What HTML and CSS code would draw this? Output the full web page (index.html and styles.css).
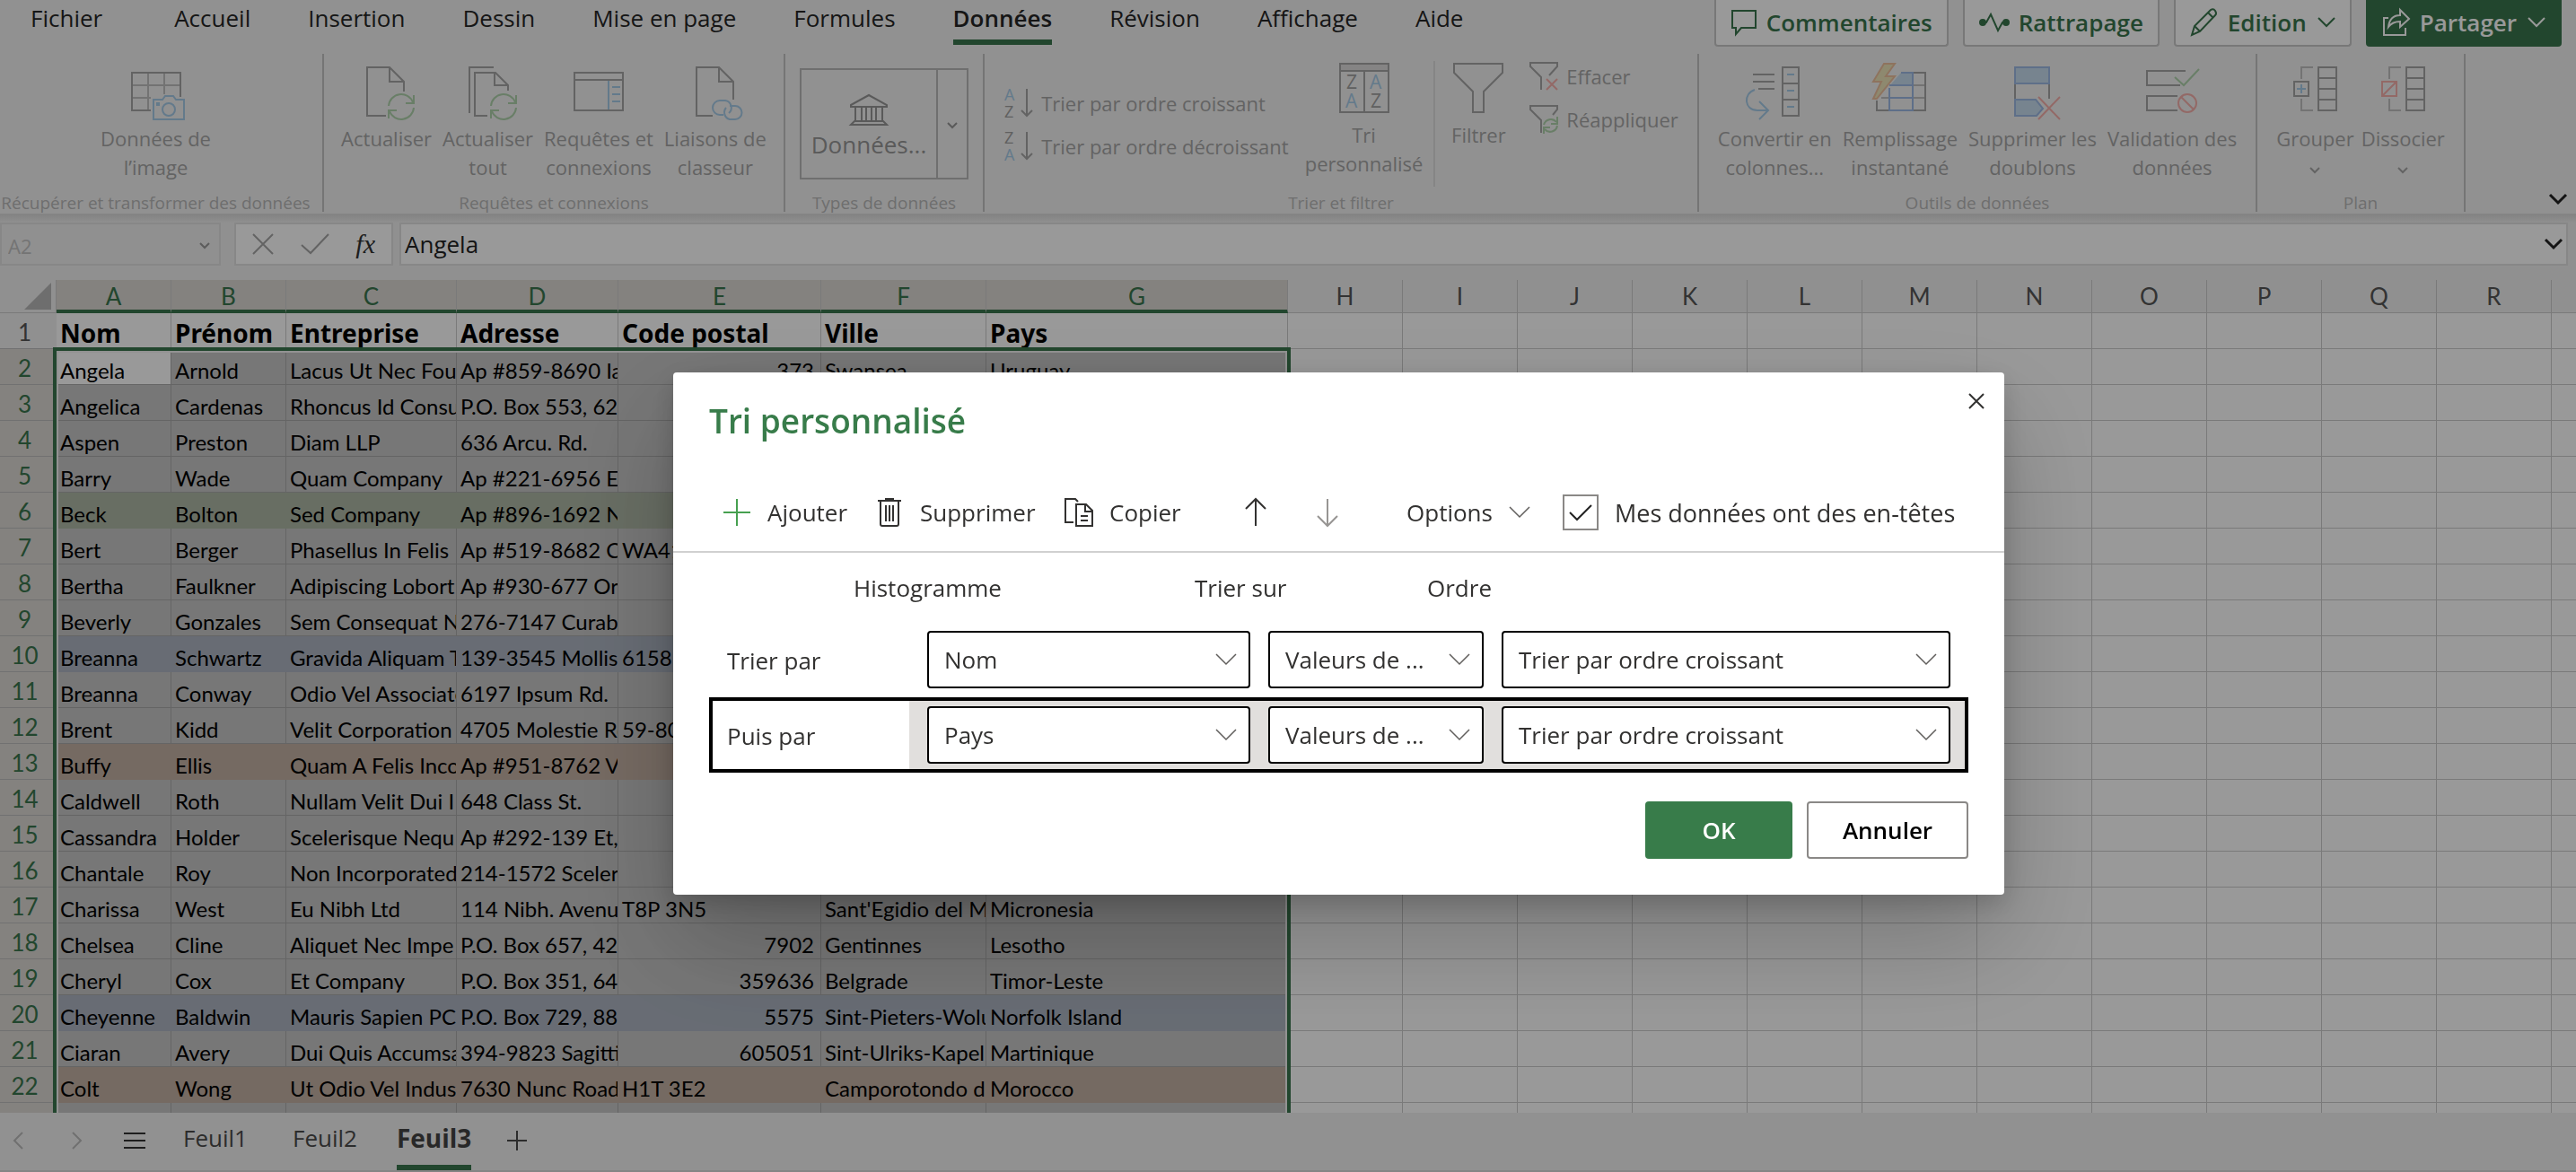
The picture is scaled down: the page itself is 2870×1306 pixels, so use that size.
FILE: index.html
```html
<!DOCTYPE html>
<html lang="fr">
<head>
<meta charset="utf-8">
<title>Classeur</title>
<link rel="stylesheet" href="styles.css">
</head>
<body>
<div class="app">
  <header class="topbar">
    <nav class="tabs">
      <a href="#fichier">Fichier</a>
      <a href="#accueil">Accueil</a>
      <a href="#insertion">Insertion</a>
      <a href="#dessin">Dessin</a>
      <a href="#mise-en-page">Mise en page</a>
      <a href="#formules">Formules</a>
      <a href="#donnees" class="active">Données</a>
      <a href="#revision">Révision</a>
      <a href="#affichage">Affichage</a>
      <a href="#aide">Aide</a>
    </nav>
    <div class="actions">
      <button class="act"><svg width="30" height="32" viewBox="0 0 30 32"><path d="M2 3h26v19H12l-6 7v-7H2z"/></svg>Commentaires</button>
      <button class="act"><svg width="34" height="32" viewBox="0 0 34 32"><path d="M4 16h4l5-9 8 18 5-9h4"/><circle class="dot" cx="4" cy="16" r="3"/><circle class="dot" cx="30" cy="16" r="3"/></svg>Rattrapage</button>
      <button class="act"><svg width="32" height="32" viewBox="0 0 32 32"><path d="M2 30l3-10L23 2q3-2 5 1t0 5L11 26zM5 20l6 6M20 5l6 6"/></svg>Edition<svg class="chev" width="20" height="12" viewBox="0 0 20 12"><path d="M1 1l9 9 9-9"/></svg></button>
      <button class="act primary"><svg width="32" height="32" viewBox="0 0 32 32"><path d="M7 11H2v19h24v-8M20 2l10 10-10 9v-6c-7 0-10 2-13 6 1-8 5-13 13-13z"/></svg>Partager<svg class="chev" width="20" height="12" viewBox="0 0 20 12"><path d="M1 1l9 9 9-9"/></svg></button>
    </div>
  </header>

  <section class="ribbon">
    <div class="group g-import">
      <div class="tools">
        <button class="tool"><svg width="64" height="66" viewBox="0 0 64 66"><path class="lt" d="M23 9v42M41 9v24M5 23h54M5 37h21"/><path d="M26 51H5V9h54v27"/><path class="bl" d="M29 39h10l3-4h9l3 4h9v22H29z"/><circle class="bl" cx="46" cy="50" r="7"/><path class="blf" d="M32 42h4v4h-4z"/></svg>Données de<br>l’image</button>
      </div>
      <h2>Récupérer et transformer des données</h2>
    </div>
    <div class="group g-query">
      <div class="tools">
        <button class="tool"><svg width="64" height="66" viewBox="0 0 64 66"><path d="M31 57H10V3h25l16 16v11M35 3v16h16"/><path class="gr" d="M34 46a14 14 0 0 1 27-4M62 34v9h-9M62 48a14 14 0 0 1-27 4M34 60v-9h9"/></svg>Actualiser</button>
        <button class="tool"><svg width="64" height="66" viewBox="0 0 64 66"><path d="M38 3H11v51M31 57H17V9h23l14 14v6M39 9v14h15"/><path class="gr" d="M35 46a14 14 0 0 1 27-4M63 34v9h-9M63 48a14 14 0 0 1-27 4M35 60v-9h9"/></svg>Actualiser<br>tout</button>
        <button class="tool"><svg width="64" height="66" viewBox="0 0 64 66"><path d="M5 9h54v42H5zM5 17h54"/><path class="bl" d="M43 18v32M47 25h9M47 33h9M47 41h9"/></svg>Requêtes et<br>connexions</button>
        <button class="tool"><svg width="64" height="66" viewBox="0 0 64 66"><path d="M29 57H11V3h25l16 16v20M36 3v16h16"/><path class="bl" d="M41 56h-4a8 8 0 0 1 0-16h6a8 8 0 0 1 4 14M48 46h6a7 7 0 0 1 0 15h-6a8 8 0 0 1-4-13"/></svg>Liaisons de<br>classeur</button>
      </div>
      <h2>Requêtes et connexions</h2>
    </div>
    <div class="group g-types">
      <div class="tools">
        <div class="gallery">
          <button class="pick"><svg width="42" height="36" viewBox="0 0 42 36"><path d="M1 12L21 1l20 11v2H1zM6 14v16M13 14v16M18 14v16M24 14v16M29 14v16M36 14v16M5 30h32l4 4H1z"/></svg>Données...</button>
          <button class="more" aria-label="Autres types"><svg width="12" height="8" viewBox="0 0 12 8"><path d="M1 1l5 5 5-5"/></svg></button>
        </div>
      </div>
      <h2>Types de données</h2>
    </div>
    <div class="group g-sort">
      <div class="tools">
        <div class="stack sort">
          <button class="line"><svg width="34" height="36" viewBox="0 0 34 36"><text class="tb" x="1" y="15">A</text><text x="1" y="34">Z</text><path d="M26 2v30M20 26l6 6 6-6"/></svg>Trier par ordre croissant</button>
          <button class="line"><svg width="34" height="36" viewBox="0 0 34 36"><text x="1" y="15">Z</text><text class="tb" x="1" y="34">A</text><path d="M26 2v30M20 26l6 6 6-6"/></svg>Trier par ordre décroissant</button>
        </div>
        <button class="tool up"><svg width="64" height="66" viewBox="0 0 64 66"><path class="fillg" d="M5 3h54v8H5z"/><path d="M5 3h54v54H5zM5 11h54M32 11v46"/><text class="lg" x="12" y="31">Z</text><text class="lg tb" x="11" y="52">A</text><text class="lg tb" x="38" y="31">A</text><text class="lg" x="39" y="52">Z</text></svg>Tri<br>personnalisé</button>
        <span class="rule"></span>
        <button class="tool up"><svg width="64" height="66" viewBox="0 0 64 66"><path d="M5 3h54v10L38 34v23H26V34L5 13z"/></svg>Filtrer</button>
        <div class="stack filter">
          <button class="line"><svg width="34" height="34" viewBox="0 0 34 34"><path d="M14 32V18L2 6V2h30v4l-9 10"/><path class="rd" d="M20 20l12 12M32 20L20 32"/></svg>Effacer</button>
          <button class="line"><svg width="34" height="34" viewBox="0 0 34 34"><path d="M14 32V18L2 6V2h30v4l-5 6"/><path class="gr" d="M17 23a8 8 0 0 1 14-3M32 14v8h-7M32 24a8 8 0 0 1-14 4M17 33v-7h7"/></svg>Réappliquer</button>
        </div>
      </div>
      <h2>Trier et filtrer</h2>
    </div>
    <div class="group g-tools">
      <div class="tools">
        <button class="tool"><svg width="64" height="66" viewBox="0 0 64 66"><path d="M8 11h24M8 19h24M14 27h18M41 3h18v54H41zM41 21h18M41 39h18"/><path class="bl" d="M46 11h8M46 29h8M46 47h8M10 28C-3 32-2 51 13 51h12M15 41l10 10-10 10"/></svg>Convertir en<br>colonnes...</button>
        <button class="tool"><svg width="64" height="66" viewBox="0 0 64 66"><path class="lt" d="M47 23h13M47 37h13M11 37h9"/><path d="M47 9h13v42H6V40"/><path class="fillb" d="M33 9h13v14H21z"/><path class="b2" d="M33 9h13v42H20V26M20 23h26M20 37h26"/><path class="or" d="M14-1h12L16 13h10L6 38H2l9-19H2z"/></svg>Remplissage<br>instantané</button>
        <button class="tool"><svg width="64" height="66" viewBox="0 0 64 66"><path d="M13 21v18M51 21v17"/><path class="b2 fillb" d="M13 3h38v18H13zM37 57H13V39h23l8 10z"/><path class="rd" d="M39 36l24 25M63 36L39 61"/></svg>Supprimer les<br>doublons</button>
        <button class="tool"><svg width="64" height="66" viewBox="0 0 64 66"><path d="M47 7H4v16h37M38 35H4v16h34"/><path class="gr" d="M35 14l10 9L62 5"/><circle class="rd" cx="49" cy="43" r="10"/><path class="rd" d="M42 36l14 14"/></svg>Validation des<br>données</button>
      </div>
      <h2>Outils de données</h2>
    </div>
    <div class="group g-plan">
      <div class="tools">
        <button class="tool"><svg width="64" height="66" viewBox="0 0 64 66"><path class="lt" d="M30 3H17v13M17 38v13h13"/><path d="M9 19h16v16H9zM36 3h20v48H36zM36 15h20M36 27h20M36 39h20"/><path class="bl" d="M17 22v10M12 27h10"/></svg>Grouper<svg class="drop" width="12" height="8" viewBox="0 0 12 8"><path d="M1 1l5 5 5-5"/></svg></button>
        <button class="tool"><svg width="64" height="66" viewBox="0 0 64 66"><path class="lt" d="M30 3H17v13M17 38v13h13"/><path d="M36 3h20v48H36zM36 15h20M36 27h20M36 39h20"/><path class="rd" d="M9 19h16v16H9zM9 35l16-16"/></svg>Dissocier<svg class="drop" width="12" height="8" viewBox="0 0 12 8"><path d="M1 1l5 5 5-5"/></svg></button>
      </div>
      <h2>Plan</h2>
    </div>
    <button class="collapse" aria-label="Réduire le ruban"><svg width="20" height="12" viewBox="0 0 20 12"><path d="M1 1l9 9 9-9"/></svg></button>
  </section>

  <section class="formula">
    <div class="namebox"><input value="A2" aria-label="Zone Nom"><svg width="12" height="8" viewBox="0 0 12 8"><path d="M1 1l5 5 5-5"/></svg></div>
    <div class="fx">
      <svg width="24" height="24" viewBox="0 0 24 24"><path d="M1 1l22 22M23 1L1 23"/></svg>
      <svg width="32" height="24" viewBox="0 0 32 24"><path d="M1 13l10 9L31 1"/></svg>
      <i>fx</i>
    </div>
    <div class="entry"><input value="Angela" aria-label="Barre de formule"><svg width="20" height="12" viewBox="0 0 20 12"><path d="M1 1l9 9 9-9"/></svg></div>
  </section>

  <main class="sheet">
    <table>
      <colgroup><col class="c-n"><col class="c-a"><col class="c-a"><col class="c-c"><col class="c-d"><col class="c-e"><col class="c-f"><col class="c-g"><col class="c-a" span="12"></colgroup>
      <thead>
        <tr><td class="corner"><svg width="30" height="30" viewBox="0 0 30 30"><path d="M30 0v30H0z"/></svg></td><th class="on">A</th><th class="on">B</th><th class="on">C</th><th class="on">D</th><th class="on">E</th><th class="on">F</th><th class="on">G</th><th>H</th><th>I</th><th>J</th><th>K</th><th>L</th><th>M</th><th>N</th><th>O</th><th>P</th><th>Q</th><th>R</th><th></th></tr>
      </thead>
      <tbody>
        <tr class="titles"><th>1</th><td>Nom</td><td>Prénom</td><td>Entreprise</td><td>Adresse</td><td>Code postal</td><td>Ville</td><td>Pays</td><td class="rest" colspan="12"></td></tr>
        <tr><th>2</th><td class="current">Angela</td><td>Arnold</td><td>Lacus Ut Nec Foun</td><td>Ap #859-8690 Iac</td><td class="num">373</td><td>Swansea</td><td>Uruguay</td><td class="rest" colspan="12"></td></tr>
        <tr><th>3</th><td>Angelica</td><td>Cardenas</td><td>Rhoncus Id Consu</td><td>P.O. Box 553, 626</td><td></td><td></td><td></td><td class="rest" colspan="12"></td></tr>
        <tr><th>4</th><td>Aspen</td><td>Preston</td><td>Diam LLP</td><td>636 Arcu. Rd.</td><td></td><td></td><td></td><td class="rest" colspan="12"></td></tr>
        <tr><th>5</th><td>Barry</td><td>Wade</td><td>Quam Company</td><td>Ap #221-6956 Eu</td><td></td><td></td><td></td><td class="rest" colspan="12"></td></tr>
        <tr class="green"><th>6</th><td>Beck</td><td>Bolton</td><td>Sed Company</td><td>Ap #896-1692 Nu</td><td></td><td></td><td></td><td class="rest" colspan="12"></td></tr>
        <tr><th>7</th><td>Bert</td><td>Berger</td><td>Phasellus In Felis</td><td>Ap #519-8682 Cu</td><td>WA41</td><td></td><td></td><td class="rest" colspan="12"></td></tr>
        <tr><th>8</th><td>Bertha</td><td>Faulkner</td><td>Adipiscing Lobort</td><td>Ap #930-677 Orc</td><td></td><td></td><td></td><td class="rest" colspan="12"></td></tr>
        <tr><th>9</th><td>Beverly</td><td>Gonzales</td><td>Sem Consequat N</td><td>276-7147 Curabi</td><td></td><td></td><td></td><td class="rest" colspan="12"></td></tr>
        <tr class="blue"><th>10</th><td>Breanna</td><td>Schwartz</td><td>Gravida Aliquam T</td><td>139-3545 Mollis</td><td>6158</td><td></td><td></td><td class="rest" colspan="12"></td></tr>
        <tr><th>11</th><td>Breanna</td><td>Conway</td><td>Odio Vel Associate</td><td>6197 Ipsum Rd.</td><td></td><td></td><td></td><td class="rest" colspan="12"></td></tr>
        <tr><th>12</th><td>Brent</td><td>Kidd</td><td>Velit Corporation</td><td>4705 Molestie Ro</td><td>59-80</td><td></td><td></td><td class="rest" colspan="12"></td></tr>
        <tr class="orange"><th>13</th><td>Buffy</td><td>Ellis</td><td>Quam A Felis Inco</td><td>Ap #951-8762 Vi</td><td></td><td></td><td></td><td class="rest" colspan="12"></td></tr>
        <tr><th>14</th><td>Caldwell</td><td>Roth</td><td>Nullam Velit Dui I</td><td>648 Class St.</td><td></td><td></td><td></td><td class="rest" colspan="12"></td></tr>
        <tr><th>15</th><td>Cassandra</td><td>Holder</td><td>Scelerisque Nequ</td><td>Ap #292-139 Et,</td><td></td><td></td><td></td><td class="rest" colspan="12"></td></tr>
        <tr><th>16</th><td>Chantale</td><td>Roy</td><td>Non Incorporated</td><td>214-1572 Sceleri</td><td></td><td></td><td></td><td class="rest" colspan="12"></td></tr>
        <tr><th>17</th><td>Charissa</td><td>West</td><td>Eu Nibh Ltd</td><td>114 Nibh. Avenu</td><td>T8P 3N5</td><td>Sant'Egidio del M</td><td>Micronesia</td><td class="rest" colspan="12"></td></tr>
        <tr><th>18</th><td>Chelsea</td><td>Cline</td><td>Aliquet Nec Impe</td><td>P.O. Box 657, 426</td><td class="num">7902</td><td>Gentinnes</td><td>Lesotho</td><td class="rest" colspan="12"></td></tr>
        <tr><th>19</th><td>Cheryl</td><td>Cox</td><td>Et Company</td><td>P.O. Box 351, 648</td><td class="num">359636</td><td>Belgrade</td><td>Timor-Leste</td><td class="rest" colspan="12"></td></tr>
        <tr class="blue"><th>20</th><td>Cheyenne</td><td>Baldwin</td><td>Mauris Sapien PC</td><td>P.O. Box 729, 884</td><td class="num">5575</td><td>Sint-Pieters-Wolu</td><td>Norfolk Island</td><td class="rest" colspan="12"></td></tr>
        <tr><th>21</th><td>Ciaran</td><td>Avery</td><td>Dui Quis Accumsa</td><td>394-9823 Sagittis</td><td class="num">605051</td><td>Sint-Ulriks-Kapell</td><td>Martinique</td><td class="rest" colspan="12"></td></tr>
        <tr class="orange"><th>22</th><td>Colt</td><td>Wong</td><td>Ut Odio Vel Indust</td><td>7630 Nunc Road</td><td>H1T 3E2</td><td>Camporotondo d</td><td>Morocco</td><td class="rest" colspan="12"></td></tr>
        <tr><th></th><td></td><td></td><td></td><td></td><td></td><td></td><td></td><td class="rest" colspan="12"></td></tr>
      </tbody>
    </table>
    <div class="selection"></div>
  </main>

  <footer class="sheets">
    <button class="nav faint" aria-label="Précédent"><svg width="12" height="20" viewBox="0 0 12 20"><path d="M11 1l-9 9 9 9"/></svg></button>
    <button class="nav faint" aria-label="Suivant"><svg width="12" height="20" viewBox="0 0 12 20"><path d="M1 1l9 9-9 9"/></svg></button>
    <button class="nav wide" aria-label="Toutes les feuilles"><svg width="24" height="20" viewBox="0 0 24 20"><path d="M0 2h24M0 10h24M0 18h24"/></svg></button>
    <a href="#feuil1">Feuil1</a>
    <a href="#feuil2">Feuil2</a>
    <a href="#feuil3" class="active">Feuil3</a>
    <button class="nav" aria-label="Nouvelle feuille"><svg width="22" height="22" viewBox="0 0 22 22"><path d="M11 0v22M0 11h22"/></svg></button>
  </footer>
</div>

<div class="scrim"></div>

<section class="dialog" role="dialog" aria-labelledby="dlg-title">
  <button class="close" aria-label="Fermer"><svg width="18" height="18" viewBox="0 0 18 18"><path d="M1 1l16 16M17 1L1 17"/></svg></button>
  <h1 id="dlg-title">Tri personnalisé</h1>
  <div class="commands">
    <button class="cmd w-add"><svg class="plus" width="32" height="32" viewBox="0 0 32 32"><path d="M16 1v30M1 16h30"/></svg>Ajouter</button>
    <button class="cmd w-del"><svg width="32" height="32" viewBox="0 0 32 32"><path d="M3 3h26M12 3V1h8v2M6 3v26q0 2 2 2h16q2 0 2-2V3M12 8v18M16 8v18M20 8v18"/></svg>Supprimer</button>
    <button class="cmd w-copy"><svg width="32" height="32" viewBox="0 0 32 32"><path d="M10 27H1V1h11l3 3M13 7h11l7 7v17H13zM23 7v8h8M18 20h8M18 25h8"/></svg>Copier</button>
    <button class="cmd w-up" aria-label="Monter"><svg width="32" height="32" viewBox="0 0 32 32"><path d="M16 31V1M5 12L16 1l11 11"/></svg></button>
    <button class="cmd w-down" aria-label="Descendre"><svg width="32" height="32" viewBox="0 0 32 32"><path d="M16 1v30M5 20l11 11 11-11"/></svg></button>
    <button class="cmd w-opt">Options<svg class="thin" width="24" height="14" viewBox="0 0 24 14"><path d="M1 1l11 11L23 1"/></svg></button>
    <label class="check"><input type="checkbox" checked>Mes données ont des en-têtes</label>
  </div>
  <div class="heads"><span>Histogramme</span><span>Trier sur</span><span>Ordre</span></div>
  <div class="level">
    <label for="col1">Trier par</label>
    <div class="fields">
      <div class="pickbox"><select id="col1"><option>Nom</option></select><svg class="thin" width="24" height="14" viewBox="0 0 24 14"><path d="M1 1l11 11L23 1"/></svg></div>
      <div class="pickbox"><select aria-label="Trier sur"><option>Valeurs de ...</option></select><svg class="thin" width="24" height="14" viewBox="0 0 24 14"><path d="M1 1l11 11L23 1"/></svg></div>
      <div class="pickbox"><select aria-label="Ordre"><option>Trier par ordre croissant</option></select><svg class="thin" width="24" height="14" viewBox="0 0 24 14"><path d="M1 1l11 11L23 1"/></svg></div>
    </div>
  </div>
  <div class="level chosen">
    <label for="col2">Puis par</label>
    <div class="fields">
      <div class="pickbox"><select id="col2"><option>Pays</option></select><svg class="thin" width="24" height="14" viewBox="0 0 24 14"><path d="M1 1l11 11L23 1"/></svg></div>
      <div class="pickbox"><select aria-label="Trier sur"><option>Valeurs de ...</option></select><svg class="thin" width="24" height="14" viewBox="0 0 24 14"><path d="M1 1l11 11L23 1"/></svg></div>
      <div class="pickbox"><select aria-label="Ordre"><option>Trier par ordre croissant</option></select><svg class="thin" width="24" height="14" viewBox="0 0 24 14"><path d="M1 1l11 11L23 1"/></svg></div>
    </div>
  </div>
  <div class="buttons"><button class="ok">OK</button><button class="cancel">Annuler</button></div>
</section>
</body>
</html>
```

FILE: styles.css
```css
* { box-sizing: border-box; }
body { margin: 0; font-family: "Open Sans", "Noto Sans", sans-serif; font-size: 26px; color: #262626; overflow: hidden; }
button, input, select { font: inherit; color: inherit; border: 0; background: none; padding: 0; margin: 0; }
a { color: inherit; text-decoration: none; }
svg { fill: none; stroke: currentColor; stroke-width: 2; overflow: visible; flex: none; }

.app { height: 100vh; display: flex; flex-direction: column; background: #f2f2f2; }

/* top tabs */
.topbar { height: 60px; flex: none; display: flex; justify-content: space-between; align-items: flex-start; padding-right: 16px; }
.tabs { display: flex; gap: 64px; padding-left: 34px; }
.tabs a { height: 50px; line-height: 40px; }
.tabs a:first-child { margin-right: 16px; }
.tabs .active { font-weight: 600; border-bottom: 6px solid #3a764d; }
.actions { display: flex; gap: 16px; }
.act { height: 52px; padding: 0 16px; display: flex; align-items: center; gap: 10px; font-weight: 600; color: #3a764d; background: #fff; border: 2px solid #c8c8c8; border-top: 0; border-radius: 0 0 4px 4px; }
.act .dot { fill: currentColor; }
.act .chev { margin-left: 2px; }
.act.primary { background: #3a764d; border-color: #3a764d; color: #fff; }

/* ribbon */
.ribbon { height: 180px; flex: none; display: flex; position: relative; border-bottom: 2px solid #dcdcdc; color: #a6a6a6; font-size: 22px; }
.group { height: 176px; display: flex; flex-direction: column; justify-content: space-between; border-right: 2px solid #c4c4c4; }
.g-import { width: 361px; padding-right: 12px; }
.g-query { width: 514px; }
.g-types { width: 222px; }
.g-sort { width: 796px; }
.g-tools { width: 622px; }
.g-plan { width: 232px; }
.group h2 { margin: 0; font-size: 19px; line-height: 20px; font-weight: 400; text-align: center; color: #b8b8b8; white-space: nowrap; }
.tools { display: flex; justify-content: center; align-items: flex-start; gap: 8px; }
.g-query .tools, .g-tools .tools { gap: 12px; }
.tool { padding-top: 12px; line-height: 32px; white-space: nowrap; display: block; text-align: center; }
.tool > svg { display: block; margin: 0 auto; }
.tool.up { padding-top: 8px; }
.tool > .drop { margin-top: 16px; }
.lt { stroke: #c0c0c0; }
.bl { stroke: #a6cbe8; }
.blf { fill: #a6cbe8; stroke: none; }
.b2 { stroke: #9db9e4; }
.gr { stroke: #afd3ac; }
.rd { stroke: #f5afab; }
.or { stroke: #edc09d; fill: #ede5ba; }
.fillb { fill: #c6dcee; }
path.fillb:not(.b2) { stroke: none; }
.fillg { fill: #dedcdc; }
.ribbon text { font: 18px "Open Sans", sans-serif; fill: #a0a0a0; stroke: none; }
.ribbon text.lg { font-size: 21px; }
.ribbon text.tb { fill: #a6cbe8; }
.gallery { margin-top: 16px; width: 188px; height: 124px; display: flex; border: 2px solid #bababa; font-size: 26px; color: #969696; }
.pick { width: 150px; padding-bottom: 2px; }
.pick svg { display: block; margin: 10px auto 2px; }
.more { flex: 1; border-left: 2px solid #bababa; }
.more svg { display: block; margin: 4px auto 0; }
.stack { display: flex; flex-direction: column; }
.line { display: flex; align-items: center; gap: 8px; height: 48px; white-space: nowrap; }
.sort { padding-top: 31px; margin-right: 10px; }
.filter { padding-top: 1px; margin-left: 16px; }
.rule { width: 2px; height: 140px; margin: 8px 8px 0 4px; background: #dedede; }
.collapse { position: absolute; right: 10px; bottom: 10px; color: #222; }
.collapse svg, .entry svg { display: block; stroke-width: 3; }

/* formula bar */
.formula { height: 72px; flex: none; display: flex; align-items: flex-start; padding: 8px 9px 0 0; background: linear-gradient(#dcdcdc, #f0f0f0 8px); }
.formula > div { height: 48px; display: flex; align-items: center; border: 2px solid #e2e2e2; }
.namebox { width: 246px; margin-right: 15px; padding: 4px 10px 0 7px; color: #c2c2c2; font-size: 22px; }
.namebox input { flex: 1; min-width: 0; }
.namebox svg { color: #999; }
.fx { width: 177px; margin-right: 7px; padding: 0 18px; justify-content: space-between; background: #fff; color: #a6a6a6; }
.fx i { font: italic 30px "Liberation Serif", serif; color: #333; }
.entry { flex: 1; background: #fff; padding: 0 4px; color: #222; }
.entry input { flex: 1; min-width: 0; }

/* grid */
.sheet { flex: 1; min-height: 0; overflow: hidden; position: relative; background: #fff; font-family: Lato, "Open Sans", sans-serif; }
table { width: 2971px; table-layout: fixed; border-collapse: separate; border-spacing: 0; }
.c-n { width: 63px; } .c-a { width: 128px; } .c-c { width: 190px; } .c-d { width: 180px; } .c-e { width: 226px; } .c-f { width: 184px; } .c-g { width: 336px; }
td, th { padding: 0; overflow: hidden; white-space: nowrap; }
thead th, .corner { height: 37px; vertical-align: top; padding-top: 3px; font-size: 26px; line-height: 30px; font-weight: 400; color: #555; background: #f0f0f0; border-right: 1px solid #ccc; border-bottom: 1px solid #ccc; }
thead th.on { color: #3a764d; background: #dcd9d4; border-bottom: 4px solid #3a764d; }
.corner svg { display: block; margin-left: 27px; }
.corner path { fill: #b8b8b8; stroke: none; }
tbody th { height: 40px; font-size: 26px; line-height: 36px; font-weight: 400; color: #3a764d; background: #dcd9d4; border-bottom: 1px solid #bdbdbd; padding: 3px 8px 0 0; }
tbody td { height: 40px; font-size: 24px; line-height: 30px; padding: 9px 1px 0 4px; color: #000; background: #c6c6c6; border-right: 1px solid #a8a8a8; border-bottom: 1px solid #a8a8a8; }
.titles th { color: #555; background: #f0f0f0; }
.titles td { background: #fff; border-color: #ccc; font: bold 28px/34px "Noto Sans", sans-serif; padding-top: 4px; }
tbody td.num { text-align: right; padding-right: 7px; }
tbody td.current { background: #fff; }
tbody td.rest { padding: 0; border-right: 0; border-bottom-color: #ccc; background: repeating-linear-gradient(90deg, #fff 0 127px, #ccc 127px 128px); }
.green td { background: #aeb7a6; border-color: #aeb7a6; }
.blue td { background: #adb5c2; border-color: #adb5c2; }
.orange td { background: #c4b1a4; border-color: #c4b1a4; }
.selection { position: absolute; left: 59px; top: 75px; width: 1379px; height: 900px; border: 4px solid #3a764d; box-shadow: inset 0 0 0 2px #f4f4f4; }

/* sheet tabs */
.sheets { height: 66px; flex: none; display: flex; align-items: flex-start; gap: 50px; padding: 0 14px; border-bottom: 2px solid #dcdcdc; color: #4a4a4a; }
.sheets a { height: 64px; line-height: 56px; }
.sheets .active { font-size: 28px; font-weight: 700; border-bottom: 6px solid #3a764d; margin-left: -6px; color: #444; }
.nav { height: 62px; width: 16px; }
.nav svg { display: block; }
.faint { color: #bbb; }
.nav.wide { width: 24px; margin: 0 -8px; color: #333; }
.nav:last-child { margin-left: -10px; }

/* dialog */
.scrim { position: fixed; inset: 0; background: rgba(0, 0, 0, .4); }
.dialog { position: fixed; left: 750px; top: 415px; width: 1483px; padding: 27px 40px 40px; background: #fff; border-radius: 4px; color: #323130; box-shadow: 0 51px 115px rgba(0, 0, 0, .22), 0 10px 29px rgba(0, 0, 0, .18); }
.dialog h1 { margin: 0; font-size: 37px; line-height: 54px; font-weight: 600; color: #387c4a; }
.close { position: absolute; right: 22px; top: 23px; }
.close svg { display: block; }
.commands { display: flex; align-items: center; height: 120px; padding: 32px 40px 0 55px; margin: 0 -40px; border-bottom: 2px solid #d0d0d0; }
.cmd { display: flex; align-items: center; gap: 18px; }
.w-add { width: 170px; } .w-del { width: 211px; } .w-copy { width: 197px; } .w-up { width: 80px; } .w-down { width: 104px; color: #979593; } .w-opt { width: 174px; }
.plus { color: #46a050; }
.thin { color: #605e5c; }
.thin path { stroke-width: 1.5; }
.check { display: flex; align-items: center; gap: 18px; white-space: nowrap; font-size: 27px; }
.check input { appearance: none; width: 40px; height: 40px; border: 2px solid #8a8886; background: no-repeat center / 28px 20px url("data:image/svg+xml,%3Csvg xmlns='http://www.w3.org/2000/svg' viewBox='0 0 28 20'%3E%3Cpath d='M2 10l8 8L26 2' fill='none' stroke='%23222' stroke-width='2'/%3E%3C/svg%3E"); }
.heads { display: grid; grid-template-columns: 380px 259px auto; padding-left: 161px; height: 77px; line-height: 78px; }
.level { height: 84px; display: flex; border: 4px solid transparent; }
.level label { width: 219px; padding-left: 16px; line-height: 78px; height: 76px; background: #fff; }
.fields { flex: 1; display: grid; grid-template-columns: 36fr 24fr 50fr; gap: 20px; align-items: center; padding: 0 16px 0 20px; }
.chosen { border-color: #000; background: #e1dfdd; }
.pickbox { position: relative; }
.pickbox select { appearance: none; display: block; width: 100%; height: 64px; padding: 0 40px 0 17px; border: 2px solid #000; border-radius: 4px; background: #fff; }
.pickbox svg { position: absolute; right: 15px; top: 25px; pointer-events: none; }
.buttons { display: flex; justify-content: flex-end; gap: 16px; margin-top: 32px; }
.buttons button { height: 64px; border-radius: 4px; font-weight: 600; }
.ok { width: 164px; background: #387c4a; color: #fff; }
.buttons .cancel { width: 180px; border: 2px solid #8a8886; color: #000; }
```
